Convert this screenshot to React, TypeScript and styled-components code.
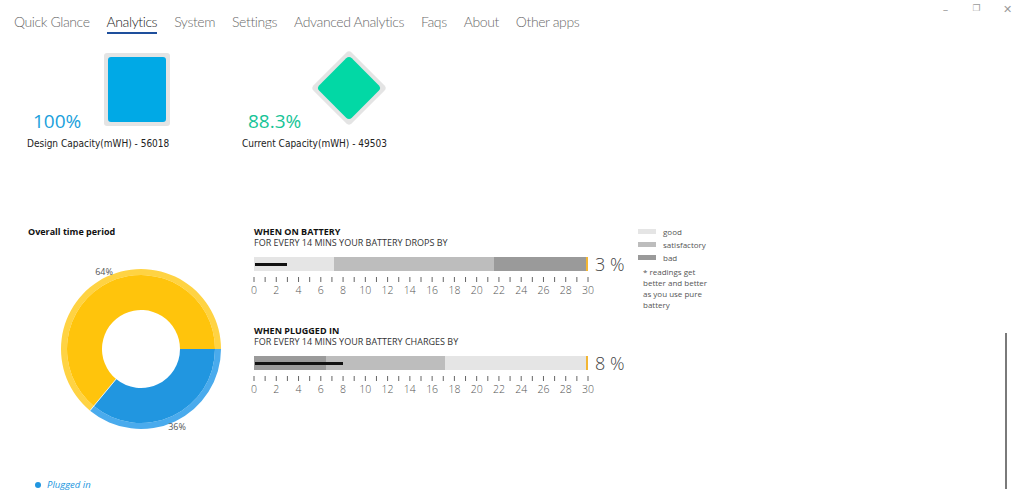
import React from 'react';
import styled, { createGlobalStyle } from 'styled-components';

const GlobalStyle = createGlobalStyle`
  html, body {
    margin: 0;
    padding: 0;
    background: #ffffff;
    font-family: "Open Sans", "Noto Sans", sans-serif;
  }
`;

const Page = styled.div`
  position: relative;
  width: 1023px;
  height: 502px;
  overflow: hidden;
  background: #fff;
`;

const Header = styled.div`
  display: flex;
  align-items: flex-start;
  justify-content: space-between;
  height: 44px;
`;

const Nav = styled.nav`
  display: flex;
  gap: 17px;
  padding: 12px 0 0 14px;
`;

const NavItem = styled.div<{ $active?: boolean }>`
  font-family: Lato, "Open Sans", sans-serif;
  font-size: 14px;
  letter-spacing: -0.4px;
  font-weight: 300;
  color: ${p => (p.$active ? '#222' : '#6b6b6b')};
  line-height: 20px;
  border-bottom: 2px solid ${p => (p.$active ? '#1e4f9c' : 'transparent')};
  white-space: nowrap;
`;

const WindowControls = styled.div`
  display: flex;
  gap: 14px;
  padding: 3px 7px 0 0;
  color: #9a9a9a;
  font-size: 11px;
  font-family: "DejaVu Sans", sans-serif;
`;

const Ctl = styled.span`
  width: 17px;
  text-align: center;
`;

const CapacityRow = styled.div`
  display: flex;
  padding: 5px 0 0 27px;
`;

const Card = styled.div<{ $width: number }>`
  width: ${p => p.$width}px;
  display: flex;
  flex-direction: column;
`;

const CardTop = styled.div<{ $gap: number }>`
  display: flex;
  align-items: flex-start;
  height: 80px;
  gap: ${p => p.$gap}px;
  padding-left: 6px;
`;

const Percent = styled.div<{ $color: string }>`
  font-size: 19px;
  color: ${p => p.$color};
  line-height: 22px;
  margin-top: 61px;
`;

const BoxFrame = styled.div`
  width: 66px;
  height: 73px;
  margin-top: 4px;
  box-sizing: border-box;
  padding: 4px;
  background: #e4e4e4;
  border-radius: 3px;
`;

const BoxFill = styled.div`
  width: 100%;
  height: 100%;
  background: #00a9e6;
  border-radius: 3px;
`;

const DiamondHolder = styled.div`
  width: 78px;
  height: 78px;
  display: flex;
  align-items: center;
  justify-content: center;
`;

const DiamondFrame = styled.div`
  width: 54px;
  height: 54px;
  box-sizing: border-box;
  padding: 4px;
  background: #e4e4e4;
  border-radius: 4px;
  transform: rotate(45deg);
`;

const DiamondFill = styled.div`
  width: 100%;
  height: 100%;
  background: #02d8a5;
  border-radius: 4px;
`;

const CapLabel = styled.div`
  margin-top: 8px;
  font-family: "DejaVu Sans Condensed", "Liberation Sans Narrow", "Noto Sans", sans-serif;
  font-size: 10px;
  line-height: 14px;
  color: #222;
  white-space: nowrap;
`;

const Main = styled.div`
  display: grid;
  grid-template-columns: 226px 384px 80px;
  padding: 75px 0 0 28px;
`;

const LeftCol = styled.div`
  display: flex;
  flex-direction: column;
`;

const SmallTitle = styled.div`
  font-size: 9px;
  font-weight: 700;
  color: #111;
  line-height: 12px;
`;

const DonutSvg = styled.svg`
  display: block;
  margin: 21px 0 0 13px;
`;

const Legend = styled.div`
  display: flex;
  align-items: center;
  gap: 6px;
  margin: 39px 0 0 7px;
  font-size: 9.5px;
  font-style: italic;
  color: #2196e0;
`;

const Dot = styled.span`
  width: 6px;
  height: 6px;
  border-radius: 50%;
  background: #2196e0;
`;

const MidCol = styled.div`
  display: flex;
  flex-direction: column;
  gap: 28px;
`;

const Section = styled.div`
  display: flex;
  flex-direction: column;
`;

const SectionTitle = styled.div`
  font-size: 9px;
  font-weight: 700;
  color: #111;
  line-height: 12px;
`;

const SectionSub = styled.div`
  font-size: 9px;
  color: #333;
  line-height: 12px;
  margin-top: -1px;
`;

const BarRow = styled.div`
  display: flex;
  align-items: center;
  gap: 7px;
  margin-top: 6px;
`;

const Bar = styled.div`
  position: relative;
  display: flex;
  width: 334px;
  height: 14px;
`;

const Segment = styled.div<{ $color: string }>`
  height: 100%;
  background: ${p => p.$color};
`;

const Measure = styled.div`
  position: absolute;
  left: 1px;
  top: 6px;
  height: 3px;
  background: #111;
`;

const Target = styled.div`
  position: absolute;
  right: 0;
  top: 0;
  width: 2px;
  height: 100%;
  background: #f2b634;
`;

const Value = styled.div`
  font-size: 18px;
  font-weight: 300;
  color: #444;
  line-height: 18px;
`;

const AxisSvg = styled.svg`
  display: block;
  margin: 4px 0 0 -6px;
  overflow: visible;
`;

const RightCol = styled.div`
  display: flex;
  flex-direction: column;
  gap: 2px;
`;

const LegendRow = styled.div`
  display: flex;
  align-items: center;
  gap: 7px;
  font-size: 8px;
  color: #555;
  line-height: 11px;
`;

const Swatch = styled.span<{ $color: string }>`
  width: 18px;
  height: 5px;
  background: ${p => p.$color};
`;

const Note = styled.div`
  margin: 1px 0 0 5px;
  width: 68px;
  font-size: 8px;
  line-height: 11px;
  color: #555;
`;

const Scroll = styled.div`
  position: absolute;
  right: 16px;
  top: 333px;
  width: 2px;
  height: 156px;
  background: #7a7a7a;
`;

const LIGHT = '#e5e5e5';
const MID = '#bdbdbd';
const DARK = '#9a9a9a';
const SCALE = 334 / 30;

type Seg = { to: number; color: string };

function arcPath(cx: number, cy: number, r0: number, r1: number, a0: number, a1: number) {
  const rad = (d: number) => (d * Math.PI) / 180;
  const p = (r: number, a: number) => `${cx + r * Math.cos(rad(a))} ${cy + r * Math.sin(rad(a))}`;
  const large = a1 - a0 > 180 ? 1 : 0;
  return `M ${p(r1, a0)} A ${r1} ${r1} 0 ${large} 1 ${p(r1, a1)} L ${p(r0, a1)} A ${r0} ${r0} 0 ${large} 0 ${p(r0, a0)} Z`;
}

const Axis: React.FC = () => {
  const ticks = Array.from({ length: 31 }, (_, i) => i);
  return (
    <AxisSvg width={346} height={20}>
      {ticks.map(i => (
        <line key={i} x1={6 + i * SCALE} x2={6 + i * SCALE} y1={0} y2={5} stroke="#666" strokeWidth={1} />
      ))}
      {ticks.filter(i => i % 2 === 0).map(i => (
        <text key={i} x={6 + i * SCALE} y={17} textAnchor="middle" fontSize={10.5} fill="#555" fontFamily="Open Sans, sans-serif" fontWeight={300}>
          {i}
        </text>
      ))}
    </AxisSvg>
  );
};

const Bullet: React.FC<{ title: string; sub: string; segs: Seg[]; measure: number; value: string }> = ({ title, sub, segs, measure, value }) => {
  let prev = 0;
  return (
    <Section>
      <SectionTitle>{title}</SectionTitle>
      <SectionSub>{sub}</SectionSub>
      <BarRow>
        <Bar>
          {segs.map((s, i) => {
            const w = (s.to - prev) * SCALE;
            prev = s.to;
            return <Segment key={i} $color={s.color} style={{ width: w }} />;
          })}
          <Measure style={{ width: measure * SCALE - 1 }} />
          <Target />
        </Bar>
        <Value>{value}</Value>
      </BarRow>
      <Axis />
    </Section>
  );
};

const Donut: React.FC = () => {
  const cx = 100;
  const cy = 90;
  const blueEnd = 0.36 * 360;
  const r = (blueEnd * Math.PI) / 180;
  return (
    <DonutSvg width={200} height={180}>
      <path d={arcPath(cx, cy, 74, 80, blueEnd, 360)} fill="#ffd343" />
      <path d={arcPath(cx, cy, 39, 74, blueEnd, 360)} fill="#ffc40c" />
      <path d={arcPath(cx, cy, 74, 80, 0, blueEnd)} fill="#4aabed" />
      <path d={arcPath(cx, cy, 39, 74, 0, blueEnd)} fill="#2196e0" />
      <line x1={cx + 39 * Math.cos(r)} y1={cy + 39 * Math.sin(r)} x2={cx + 80 * Math.cos(r)} y2={cy + 80 * Math.sin(r)} stroke="#fff" strokeWidth={0.8} />
      <text x={63} y={16} textAnchor="middle" fontSize={9} fill="#555" fontFamily="Open Sans, sans-serif">64%</text>
      <text x={136} y={171} textAnchor="middle" fontSize={9} fill="#555" fontFamily="Open Sans, sans-serif">36%</text>
    </DonutSvg>
  );
};

const navItems = ['Quick Glance', 'Analytics', 'System', 'Settings', 'Advanced Analytics', 'Faqs', 'About', 'Other apps'];

export default function App() {
  return (
    <Page>
      <GlobalStyle />
      <Header>
        <Nav>
          {navItems.map(n => (
            <NavItem key={n} $active={n === 'Analytics'}>{n}</NavItem>
          ))}
        </Nav>
        <WindowControls>
          <Ctl>–</Ctl>
          <Ctl style={{ fontSize: 9 }}>❐</Ctl>
          <Ctl>✕</Ctl>
        </WindowControls>
      </Header>

      <CapacityRow>
        <Card $width={215}>
          <CardTop $gap={23}>
            <Percent $color="#1a9fdc">100%</Percent>
            <BoxFrame><BoxFill /></BoxFrame>
          </CardTop>
          <CapLabel>Design Capacity(mWH) - 56018</CapLabel>
        </Card>
        <Card $width={200}>
          <CardTop $gap={9}>
            <Percent $color="#17c497">88.3%</Percent>
            <DiamondHolder><DiamondFrame><DiamondFill /></DiamondFrame></DiamondHolder>
          </CardTop>
          <CapLabel>Current Capacity(mWH) - 49503</CapLabel>
        </Card>
      </CapacityRow>

      <Main>
        <LeftCol>
          <SmallTitle>Overall time period</SmallTitle>
          <Donut />
          <Legend><Dot />Plugged in</Legend>
        </LeftCol>
        <MidCol>
          <Bullet
            title="WHEN ON BATTERY"
            sub="FOR EVERY 14 MINS YOUR BATTERY DROPS BY"
            segs={[{ to: 7.2, color: LIGHT }, { to: 21.6, color: MID }, { to: 30, color: DARK }]}
            measure={3}
            value="3 %"
          />
          <Bullet
            title="WHEN PLUGGED IN"
            sub="FOR EVERY 14 MINS YOUR BATTERY CHARGES BY"
            segs={[{ to: 6.5, color: DARK }, { to: 17.2, color: MID }, { to: 30, color: LIGHT }]}
            measure={8}
            value="8 %"
          />
        </MidCol>
        <RightCol>
          <LegendRow><Swatch $color={LIGHT} />good</LegendRow>
          <LegendRow><Swatch $color={MID} />satisfactory</LegendRow>
          <LegendRow><Swatch $color={DARK} />bad</LegendRow>
          <Note>* readings get better and better as you use pure battery</Note>
        </RightCol>
      </Main>
      <Scroll />
    </Page>
  );
}
